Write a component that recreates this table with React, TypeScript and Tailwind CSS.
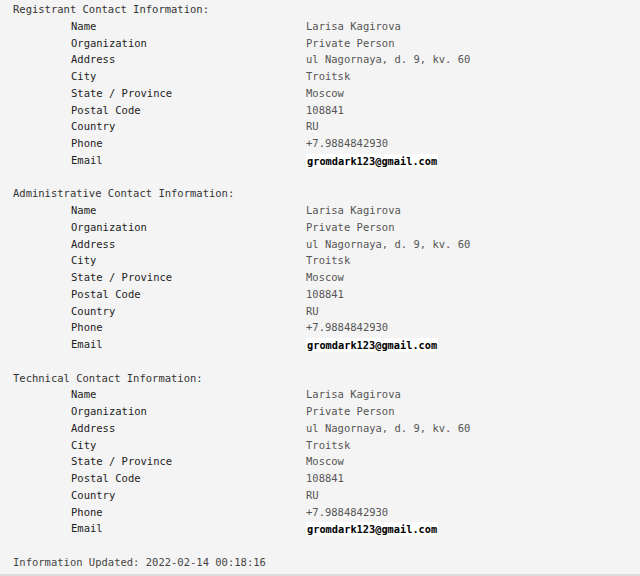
import React from "react";

const rows: [string, string][] = [
  ["Name", "Larisa Kagirova"],
  ["Organization", "Private Person"],
  ["Address", "ul Nagornaya, d. 9, kv. 60"],
  ["City", "Troitsk"],
  ["State / Province", "Moscow"],
  ["Postal Code", "108841"],
  ["Country", "RU"],
  ["Phone", "+7.9884842930"],
];

function Section({ title }: { title: string }) {
  return (
    <div className="mb-[16.75px]">
      <div className="h-[16.75px] pl-[13px] text-[#333]">{title}</div>
      {rows.map(([k, v]) => (
        <div key={k} className="flex h-[16.75px]">
          <div className="w-[306px] pl-[71px] text-[#222]">{k}</div>
          <div className="text-[#555]">{v}</div>
        </div>
      ))}
      <div className="flex h-[16.75px]">
        <div className="w-[306px] pl-[71px] text-[#222]">Email</div>
        <div className="flex items-center pt-[1px]">
          <span className="bg-white px-[1px] text-black font-bold leading-[14px] text-[10.3px]">
            gromdark123@gmail.com
          </span>
        </div>
      </div>
    </div>
  );
}

export default function App() {
  return (
    <div
      className="w-[640px] h-[576px] bg-[#f4f4f4] border-b-2 border-[#dcdcdc] text-[10.5px] leading-[16.75px] overflow-hidden pt-[1px]"
      style={{ fontFamily: '"DejaVu Sans Mono", "Liberation Mono", monospace' }}
    >
      <Section title="Registrant Contact Information:" />
      <Section title="Administrative Contact Information:" />
      <Section title="Technical Contact Information:" />
      <div className="h-[16.75px] pl-[13px] text-[#444]">Information Updated: 2022-02-14 00:18:16</div>
    </div>
  );
}
